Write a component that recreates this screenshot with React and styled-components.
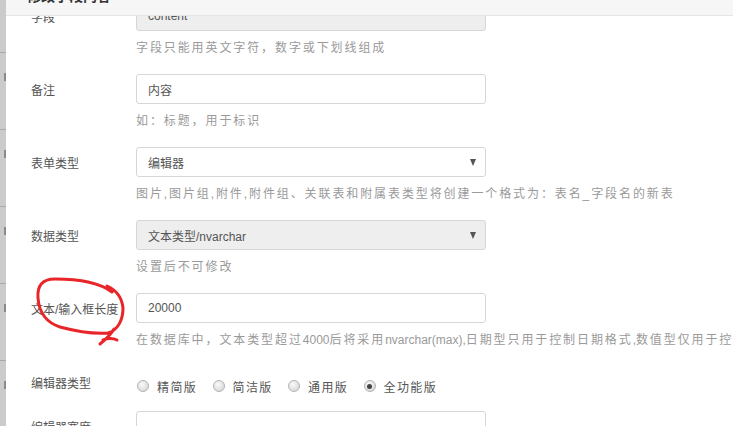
import styled, { createGlobalStyle } from "styled-components";

const GlobalStyle = createGlobalStyle`
  html, body {
    margin: 0;
    padding: 0;
    background: #fff;
  }
  body {
    font-family: "Liberation Sans", "Noto Sans CJK SC", sans-serif;
    font-size: 12px;
    color: #555;
  }
`;

const Page = styled.div`
  display: flex;
  width: 733px;
  height: 426px;
  overflow: hidden;
`;

const Backdrop = styled.div`
  width: 6px;
  flex: none;
  background: #cbcbcb;
  display: flex;
  flex-direction: column;
  padding-top: 52px;
`;

const BackdropRow = styled.div`
  height: 77px;
  flex: none;
  box-sizing: border-box;
  border-top: 1px solid #a9a9a9;
  position: relative;
  &::after {
    content: "";
    position: absolute;
    right: 0;
    top: 20px;
    width: 2px;
    height: 8px;
    background: #8a8a8a;
  }
`;

const Modal = styled.div`
  flex: 1;
  display: flex;
  flex-direction: column;
  background: #fff;
  overflow: hidden;
`;

const Header = styled.div`
  height: 15px;
  flex: none;
  background: #f6f6f6;
  border-bottom: 1px solid #e5e5e5;
  padding-left: 21px;
  overflow: hidden;
`;

const Title = styled.h4`
  margin: -14px 0 0;
  font-size: 14px;
  line-height: 20px;
  font-weight: bold;
  color: #333;
`;

const Body = styled.div`
  flex: 1;
  overflow: hidden;
  position: relative;
`;

const Form = styled.div`
  margin-top: -15px;
  padding-left: 25px;
`;

const Group = styled.div`
  display: grid;
  grid-template-columns: 105px 350px;
  margin-bottom: ${({ $gap }) => $gap ?? 16}px;
`;

const Label = styled.label`
  grid-column: 1;
  padding-top: ${({ $top }) => $top ?? 7}px;
  line-height: 20px;
  font-size: 12px;
  color: #555;
  white-space: nowrap;
`;

const Control = styled.div`
  grid-column: 2;
  height: 30px;
  box-sizing: border-box;
  border: 1px solid #d6d6d6;
  border-radius: 3px;
  background: ${({ $disabled }) => ($disabled ? "#eeeeee" : "#fff")};
  padding: 0 11px;
  display: flex;
  align-items: center;
  justify-content: space-between;
  font-size: 12px;
  color: #555;
`;

const Arrow = styled.span`
  width: 0;
  height: 0;
  border-left: 3.5px solid transparent;
  border-right: 3.5px solid transparent;
  border-top: 7px solid #555;
  margin-right: -2px;
`;

const Help = styled.div`
  grid-column: 2;
  margin-top: 7px;
  line-height: 20px;
  font-size: 12px;
  color: #9a9a9a;
  letter-spacing: 1.9px;
  white-space: nowrap;
`;

const Latin = styled.span`
  letter-spacing: 0;
`;

const RadioRow = styled.div`
  grid-column: 2;
  height: 30px;
  padding-top: 10px;
  box-sizing: border-box;
  display: flex;
  align-items: flex-start;
  padding-left: 1px;
`;

const RadioItem = styled.label`
  display: flex;
  align-items: center;
  height: 20px;
  width: 75.5px;
  flex: none;
  letter-spacing: 1.4px;
  color: #555;
  white-space: nowrap;
`;

const RadioDot = styled.span`
  width: 12px;
  height: 12px;
  box-sizing: border-box;
  border-radius: 50%;
  border: 1px solid #b3b3b3;
  background: radial-gradient(circle at 40% 35%, #fafafa 0%, #dcdcdc 70%, #cfcfcf 100%);
  margin-right: 8px;
  flex: none;
  display: flex;
  align-items: center;
  justify-content: center;
  &::after {
    content: "";
    width: 5px;
    height: 5px;
    border-radius: 50%;
    background: ${({ $checked }) => ($checked ? "#444" : "transparent")};
  }
`;

const Scribble = styled.svg`
  position: absolute;
  left: 0;
  top: 0;
  width: 727px;
  height: 410px;
  pointer-events: none;
`;

const rows = [
  { label: "字段", value: "content", disabled: true, help: "字段只能用英文字符，数字或下划线组成" },
  { label: "备注", value: "内容", help: "如：标题，用于标识" },
  {
    label: "表单类型",
    value: "编辑器",
    select: true,
    help: "图片,图片组,附件,附件组、关联表和附属表类型将创建一个格式为：表名_字段名的新表",
  },
  { label: "数据类型", value: "文本类型/nvarchar", select: true, disabled: true, help: "设置后不可修改" },
];

const editors = ["精简版", "简洁版", "通用版", "全功能版"];

export default function App() {
  return (
    <Page>
      <GlobalStyle />
      <Backdrop>
        {[0, 1, 2, 3, 4].map((i) => (
          <BackdropRow key={i} />
        ))}
      </Backdrop>
      <Modal>
        <Header>
          <Title>修改字段内容</Title>
        </Header>
        <Body>
          <Form>
            {rows.map((r) => (
              <Group key={r.label}>
                <Label>{r.label}</Label>
                <Control $disabled={r.disabled}>
                  <span>{r.value}</span>
                  {r.select && <Arrow />}
                </Control>
                <Help>{r.help}</Help>
              </Group>
            ))}
            <Group>
              <Label>文本/输入框长度</Label>
              <Control>
                <span>20000</span>
              </Control>
              <Help>
                在数据库中，文本类型超过<Latin>4000</Latin>后将采用<Latin>nvarchar(max),</Latin>日期型只用于控制日期格式
                <Latin>,</Latin>数值型仅用于控制数值范围
              </Help>
            </Group>
            <Group $gap={15}>
              <Label $top={8}>编辑器类型</Label>
              <RadioRow>
                {editors.map((e, i) => (
                  <RadioItem key={e}>
                    <RadioDot $checked={i === editors.length - 1} />
                    {e}
                  </RadioItem>
                ))}
              </RadioRow>
            </Group>
            <Group>
              <Label>编辑器宽度</Label>
              <Control />
            </Group>
          </Form>
          <Scribble viewBox="6 16 727 410">
            <path
              d="M112 292 C100 283 80 279 55 279 C42 279 37 286 38 298 C39 312 45 322 60 327 C75 331 95 334 108 333 C118 330 123 320 123 308 C122 298 116 290 107 286 M114 329 C110 336 105 340 100 344 M103 340 C108 338 113 338 117 340"
              fill="none"
              stroke="#e8262a"
              strokeWidth="3"
              strokeLinecap="round"
              strokeLinejoin="round"
            />
          </Scribble>
        </Body>
      </Modal>
    </Page>
  );
}
